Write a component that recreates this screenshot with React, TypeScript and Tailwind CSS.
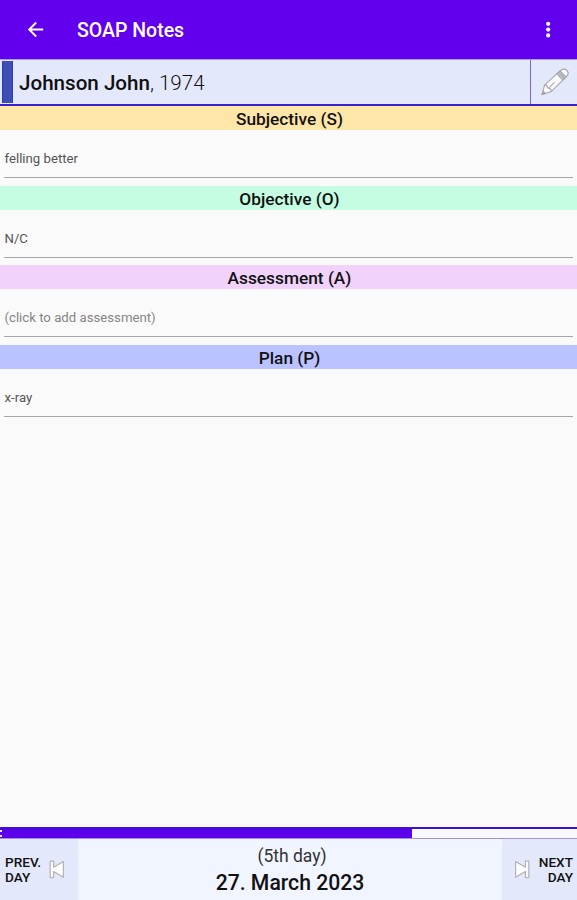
const sections = [
  { key: "s", label: "Subjective (S)", value: "felling better", bg: "bg-[#fee6a9]" },
  { key: "o", label: "Objective (O)", value: "N/C", bg: "bg-[#c5fde3]" },
  {
    key: "a",
    label: "Assessment (A)",
    value: "",
    placeholder: "(click to add assessment)",
    bg: "bg-[#f0d2fb]",
  },
  { key: "p", label: "Plan (P)", value: "x-ray", bg: "bg-[#bac2ff]" },
];

function BackIcon() {
  return (
    <svg className="w-[23px] h-[23px]" viewBox="0 0 24 24" fill="#fff">
      <path d="M20 11H7.83l5.59-5.59L12 4l-8 8 8 8 1.41-1.41L7.83 13H20v-2z" />
    </svg>
  );
}

function MoreIcon() {
  return (
    <svg className="w-2 h-5" viewBox="0 0 8 20" fill="#fff">
      <circle cx="4.2" cy="3.8" r="2.1" />
      <circle cx="4.2" cy="9.6" r="2.1" />
      <circle cx="4.2" cy="15.4" r="2.1" />
    </svg>
  );
}

function PencilIcon() {
  return (
    <svg className="w-[30px] h-[30px]" viewBox="0 0 30 30" fill="none" stroke="#a6a6ab" strokeWidth="1.1" strokeLinejoin="round">
      <path d="M2 27.6 4.6 18.2 18.6 5.2 22 2.5Q24.5 1.4 26.8 3.3Q29 5.5 27.8 8L24.6 11.3 11.4 24.4Z" fill="#fbfbfd" />
      <path d="M16.8 6.8 20 4 25.9 10 22.8 13.1Z" fill="#cdcdd2" />
      <path d="M18.4 5.4 24.4 11.5" />
      <path d="M4.6 18.2Q7.2 17.9 7.6 20.9Q10.8 21 11.4 24.4M14.4 15.4 9.4 20.4" />
      <path d="M2 27.6 3 24.2 5.4 26.5Z" fill="#a6a6ab" />
    </svg>
  );
}

function SkipIcon({ flip }: { flip?: boolean }) {
  return (
    <svg
      className={`w-4 h-[19px] shrink-0 ${flip ? "-scale-x-100" : ""}`}
      viewBox="0 0 16 19"
      fill="#fff"
      stroke="#b2b2b7"
      strokeWidth="1.2"
      strokeLinejoin="round"
    >
      <path d="M1.2 1.2H4.6V7.2L14.4 1.5V17.3L4.6 11.4V17.6H1.2Z" />
    </svg>
  );
}

export default function App() {
  return (
    <div className="flex flex-col w-[577px] h-[900px] overflow-hidden bg-[#fafafa] font-[Roboto,sans-serif] text-[#111]">
      {/* App bar */}
      <header className="flex items-center h-[59px] shrink-0 bg-[#6200ee] pl-6 pr-[25px]">
        <BackIcon />
        <h1 className="ml-[30px] pt-[3px] text-[19.5px] font-medium text-white leading-none">
          SOAP Notes
        </h1>
        <div className="ml-auto">
          <MoreIcon />
        </div>
      </header>

      {/* Patient */}
      <div className="flex h-[47px] shrink-0 bg-[#e4e8fb] border-t border-[#b09cf4] border-b-2 border-b-[#3d1fd0]">
        <div className="w-[11px] mt-px mb-px ml-0.5 bg-[#3f4db5] border-x border-[#2540b8]" />
        <div className="flex-1 pl-[6px] text-[20.6px] leading-[47px]">
          <span className="font-medium">Johnson John</span>
          <span className="font-light">, 1974</span>
        </div>
        <div className="flex items-center justify-center w-[47px] pl-0.5 border-l border-[#7a64e4]">
          <PencilIcon />
        </div>
      </div>

      {/* Notes */}
      <main className="flex-1">
        {sections.map((s) => (
          <section key={s.key} className="h-[79.6px]">
            <h2
              className={`h-[24px] pl-[2px] text-center text-[17.3px] font-medium leading-[26px] ${s.bg}`}
            >
              {s.label}
            </h2>
            <div
              className={`mx-1 h-[48px] border-b-[1.5px] border-[#a6a6a6] pl-[0.5px] pt-[21px] text-[13.2px] leading-4 ${
                s.value ? "text-[#555]" : "text-[#858585]"
              }`}
            >
              {s.value || s.placeholder}
            </div>
          </section>
        ))}
      </main>

      {/* Day progress */}
      <div className="flex h-[12px] shrink-0 bg-[#f8f9ff] border-t-2 border-[#3a12d0] border-b border-b-[#a48df0]">
        <div className="flex flex-col justify-between w-[2px] py-px bg-[#5c00ec]">
          <div className="h-0.5 bg-[#e4e8fb]" />
          <div className="h-0.5 bg-[#e4e8fb]" />
        </div>
        <div className="w-[410px] h-full bg-[#5c00ec]" />
      </div>

      {/* Day navigation */}
      <footer className="flex h-[61px] shrink-0 bg-[#f1f5ff]">
        <button className="flex items-center w-[78px] pl-[5px] bg-[#e4e8fb] text-left text-[13.6px] font-medium leading-[15px]">
          <span className="w-[44px]">
            PREV.
            <br />
            DAY
          </span>
          <SkipIcon />
        </button>
        <div className="flex-1 text-center pt-[6px]">
          <div className="pl-1 text-[17.5px] leading-[23px] font-normal text-[#333]">
            (5th day)
          </div>
          <div className="text-[21.2px] leading-[30px] font-medium">
            27. March 2023
          </div>
        </div>
        <button className="flex items-center justify-between w-[75px] pl-[12px] pr-1 bg-[#e4e8fb] text-right text-[13.6px] font-medium leading-[15px]">
          <SkipIcon flip />
          <span>
            NEXT
            <br />
            DAY
          </span>
        </button>
      </footer>
    </div>
  );
}
